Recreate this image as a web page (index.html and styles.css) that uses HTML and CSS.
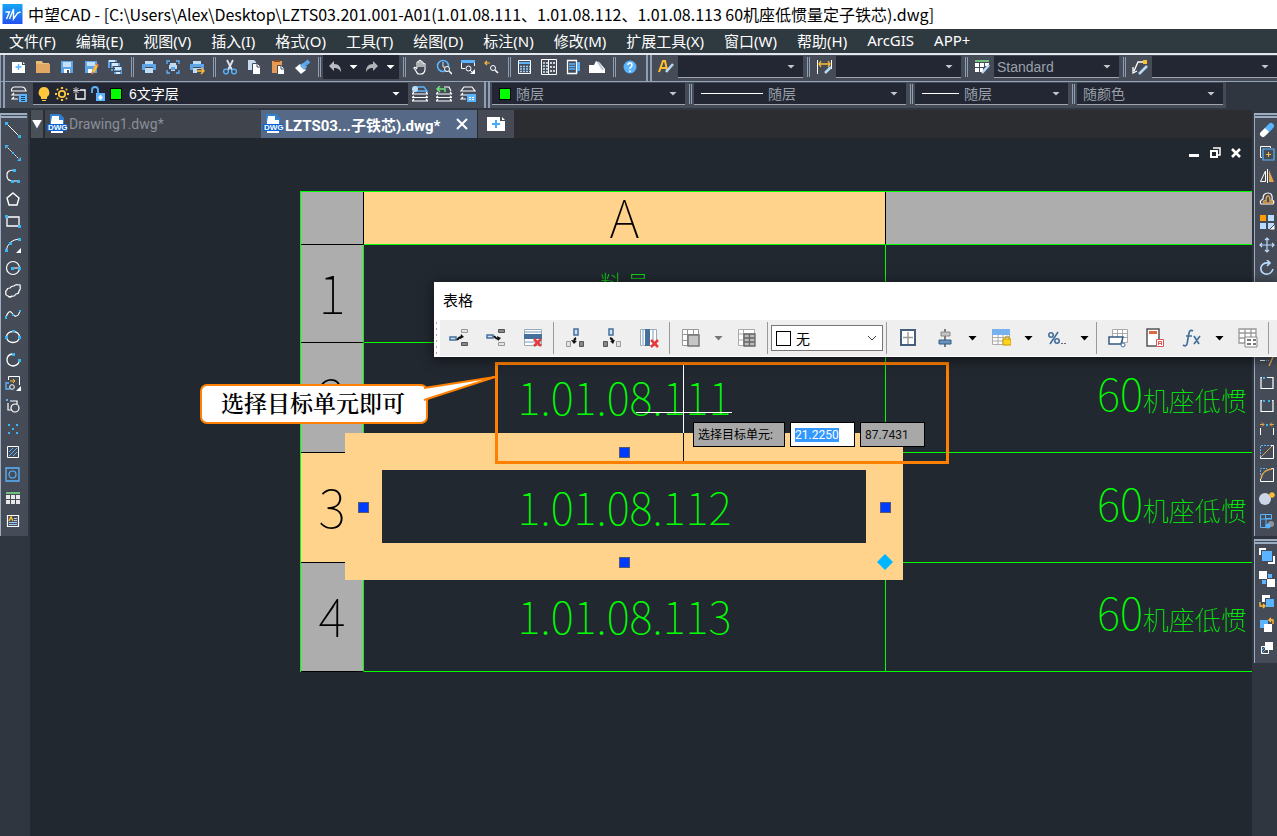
FILE: index.html
```html
<!DOCTYPE html>
<html lang="zh-CN">
<head>
<meta charset="utf-8">
<title>中望CAD</title>
<link rel="stylesheet" href="styles.css">
</head>
<body>
<svg class="sprite" aria-hidden="true">
  <symbol id="new" viewBox="0 0 16 16"><path fill="#fff" d="M1 3h10v3h3v8H1zM12 3l2 2h-2z"/><path stroke="#5ab4ff" stroke-width="1.4" d="M7.500 5v6M4.500 8h6"/></symbol>
  <symbol id="open" viewBox="0 0 16 16"><path fill="#e8bd78" d="M1 2h6l1 2h6v3H1z"/><path fill="#e2a765" d="M1 5h14v9H1z"/></symbol>
  <symbol id="save" viewBox="0 0 16 16"><path fill="#5ea5e8" d="M2 2h12v12H2z"/><path fill="#fff" d="M5 10h6v4H5z"/><path fill="#c4e0fb" d="M4 3h8v5H4z"/><path fill="#456" d="M8 11h2v3H8z"/></symbol>
  <symbol id="saveas" viewBox="0 0 16 16"><path fill="#5ea5e8" d="M2 2h12v12H2z"/><path fill="#c4e0fb" d="M4 3h8v4H4z"/><path fill="#fff" d="M5 10h4v4H5z"/><path stroke="#ffbc35" stroke-width="3" d="M14 6l-4 7"/><path stroke="#e66b3e" stroke-width="2" d="M10 13l-1 2M14 5l1 2"/></symbol>
  <symbol id="saveall" viewBox="0 0 16 16"><path fill="#5ea5e8" stroke="#454c58" d="M.500.500h10v9H.500zM3.500 3.500h10v9h-10zM6.500 7.500h9v8h-9z"/><path fill="#d6ebff" d="M2 1h6v2H2zM5 4h6v3H5zM8 8h6v3H8zM9 13h4v2H9z"/></symbol>
  <symbol id="print" viewBox="0 0 16 16"><path fill="#bfdcf7" d="M4 2h8v3H4zM4 9h8v5H4z"/><path fill="#5ea5e8" d="M1 5h14v6h-3V8H4v3H1z"/></symbol>
  <symbol id="preview" viewBox="0 0 16 16"><path fill="none" stroke="#5ab4ff" stroke-width="1.300" d="M2 5V2h3M11 2h3v3M14 11v3h-3M5 14H2v-3"/><path fill="#bfdcf7" d="M5 4h6v2H5zM4 6h8v4h-2v2H6v-2H4z"/><path fill="#5ea5e8" d="M6 8h4v3H6z"/></symbol>
  <symbol id="publish" viewBox="0 0 16 16"><path fill="#bfdcf7" d="M4 2h8v3H4zM4 9h8v5H4z"/><path fill="#5ea5e8" d="M1 5h14v6h-3V8H4v3H1z"/><path fill="none" stroke="#454c58" stroke-width="4" d="M8 12h6"/><path fill="none" stroke="#ffbc35" stroke-width="1.400" d="M8 12h7M12 9l3 3-3 3"/></symbol>
  <symbol id="cut" viewBox="0 0 16 16"><path fill="none" stroke="#dce6f0" stroke-width="1.800" d="M5 1l5 10M11 1L6 11"/><circle cx="4" cy="12.500" r="2.400" fill="none" stroke="#5ab4ff" stroke-width="1.300"/><circle cx="12" cy="12.500" r="2.400" fill="none" stroke="#5ab4ff" stroke-width="1.300"/></symbol>
  <symbol id="copy" viewBox="0 0 16 16"><path fill="#c7dcef" d="M2 1h6l2 2v8H2z"/><path fill="#fff" stroke="#454c58" d="M6.500 4.500h5l3 3v8h-8z"/><path fill="none" stroke="#454c58" d="M11 5v3h3"/></symbol>
  <symbol id="paste" viewBox="0 0 16 16"><path fill="#e69a54" d="M2 2h10v12H2z"/><path fill="#8d4c23" d="M4 1h6v2H4z"/><path fill="#fff" stroke="#454c58" d="M7.500 6.500h4l3 3v6h-7z"/><path stroke="#454c58" fill="none" d="M11 7v3h3"/></symbol>
  <symbol id="match" viewBox="0 0 16 16"><path fill="#fff" d="M1 9l5-4 6 6-5 4z"/><path stroke="#67b0ed" stroke-width="6" d="M8 9l3-3"/><path stroke="#5ea5e8" stroke-width="4" d="M10 6l5-4"/></symbol>
  <symbol id="undo" viewBox="0 0 16 16"><path fill="#b8bcc2" d="M2 7l5-5v3c5 0 7 3 7 8-2-3-3-4-7-4v3z"/></symbol>
  <symbol id="redo" viewBox="0 0 16 16"><path fill="#b0b3b8" d="M14 7L9 2v3c-5 0-7 3-7 8 2-3 3-4 7-4v3z"/></symbol>
  <symbol id="pan" viewBox="0 0 16 16"><path fill="none" stroke="#fff" stroke-width="1.100" d="M5 9V3.500q1-1.500 2 0V2q1-1.500 2 0v1.500q1-1.500 2 0V5q1-1 2 0v6q-1 4-4 4H7q-2 0-3-3L2 9q0-2 3 1M7 3.500V8M9 3.500V8M11 5v3"/></symbol>
  <symbol id="zoomrt" viewBox="0 0 16 16"><circle cx="7" cy="7" r="5.500" fill="none" stroke="#5ab4ff" stroke-width="1.600"/><path stroke="#cde5fa" fill="none" d="M7 3v5h2"/><circle cx="11" cy="10" r="2.500" fill="#454c58" stroke="#fff"/><path stroke="#fff" stroke-width="1.500" d="M13 12l3 3"/></symbol>
  <symbol id="zoomwin" viewBox="0 0 16 16"><path fill="none" stroke="#fff" d="M5 9.500H1.500V2"/><path fill="none" stroke="#fff" d="M14.500 2v5"/><path fill="#5ab4ff" d="M1 1h14v3H1z"/><circle cx="8.500" cy="9.500" r="2.500" fill="none" stroke="#fff"/><path stroke="#fff" d="M10 11l3 3"/><path fill="#fff" d="M15 10v5h-5z"/></symbol>
  <symbol id="zoomprev" viewBox="0 0 16 16"><path fill="none" stroke="#ffbc35" stroke-width="1.200" d="M1 4h5M3 2L1 4l2 2"/><circle cx="9" cy="9" r="2.500" fill="none" stroke="#fff"/><path stroke="#fff" stroke-width="1.500" d="M11 11l3 3"/></symbol>
  <symbol id="props" viewBox="0 0 16 16"><path fill="none" stroke="#fff" d="M1.500 1.500h12v13h-12z"/><path stroke="#5ab4ff" stroke-width="2" d="M2 4h11"/><path stroke="#9fcfff" stroke-width="1.600" stroke-dasharray="2 1" d="M3 7.500h10M3 10h10M3 12.500h10"/></symbol>
  <symbol id="design" viewBox="0 0 16 16"><path fill="none" stroke="#fff" d="M.500.500h15v15H.500zM7.500 1v14"/><path stroke="#d9e7f5" stroke-width="1.500" stroke-dasharray="2 1" d="M2 4h5M2 7h5M2 10h5M2 13h5"/><path fill="none" stroke="#fff" d="M9.500 3.500h1v1h-1zM12.500 3.500h1v1h-1zM9.500 7.500h1v1h-1zM12.500 7.500h1v1h-1zM9.500 11.500h1v1h-1zM12.500 11.500h1v1h-1z"/></symbol>
  <symbol id="palette" viewBox="0 0 16 16"><path fill="none" stroke="#fff" stroke-width="1.300" d="M2.500 1.500h9v13h-9z"/><path stroke="#5ab4ff" stroke-width="1.400" d="M4 5h6M4 7.500h6M4 10h6"/><path fill="#5ab4ff" d="M12 3h3v9h-2v2h-1z"/></symbol>
  <symbol id="clean" viewBox="0 0 16 16"><path fill="#fff" d="M0 6h5l2-4 4 2 5 6v4H0z"/><path stroke="#bfc8d2" stroke-width="2" d="M9 3l5 8"/></symbol>
  <symbol id="help" viewBox="0 0 16 16"><circle cx="8" cy="8" r="6.500" fill="#5ab4ff"/><path fill="none" stroke="#fff" stroke-width="1.500" d="M6 6q0-2 2-2t2 2-2 3v1M8 11.500V13"/></symbol>
  <symbol id="textstyle" viewBox="0 0 16 16"><path fill="none" stroke="#ffc02e" stroke-width="2" d="M1 13L5 2h2l2 9M3 9h5"/><path stroke="#b8d8f5" stroke-width="2.500" d="M15 5l-7 8"/></symbol>
  <symbol id="dimstyle" viewBox="0 0 16 16"><path stroke="#fff" d="M1.500 1v14M15.500 1v9"/><path fill="none" stroke="#ffc02e" stroke-width="1.300" d="M3 5h11M5 2L3 5l2 3M12 2l2 3-2 3"/><path stroke="#b8d8f5" stroke-width="2.500" d="M15 8l-6 6"/></symbol>
  <symbol id="tabstyle" viewBox="0 0 16 16"><path fill="#71bf7a" d="M1 1h14v2H1z"/><path fill="#fff" d="M1 4h4v4H1zM6 4h4v4H6zM11 4h4v3h-4zM1 9h4v4H1zM6 9h3v4H6z"/><path stroke="#b8d8f5" stroke-width="2.500" d="M15 6l-7 8"/></symbol>
  <symbol id="leader" viewBox="0 0 16 16"><path fill="none" stroke="#fff" stroke-width="1.300" d="M12 3H6L2 12M1 8v6l4-2"/><path fill="#ffc02e" d="M11 1h4v4h-4z"/><path stroke="#b8d8f5" stroke-width="2.500" d="M15 7l-8 8"/></symbol>
  <symbol id="layers" viewBox="0 0 16 16"><path fill="none" stroke="#fff" stroke-width="1.200" d="M3 1h8q3 0 4 4H0q1-4 3-4zM3 7L1 9h13M3 11l-2 2h6"/><path fill="#5ab4ff" d="M8 8h8v8H8z"/><path stroke="#17426b" d="M10 10.500h4M10 12.500h4M10 14.500h4"/></symbol>
  <symbol id="layercur" viewBox="0 0 16 16"><path fill="none" stroke="#5ab4ff" stroke-width="1.300" d="M4 1h8l3 4H1z"/><circle cx="3" cy="3" r="3" fill="#bfdcf7"/><path fill="none" stroke="#fff" stroke-width="1.200" d="M2 6L0 8h16l-2-2M2 10l-2 1.500h16L14 10M2 13l-2 2h16l-2-2"/></symbol>
  <symbol id="layerprev" viewBox="0 0 16 16"><path fill="none" stroke="#6fe07b" stroke-width="1.500" d="M9 6V3H1M4 0L1 3l3 3"/><path fill="none" stroke="#fff" stroke-width="1.200" d="M8 1h5l2 4M2 6L0 8h16l-2-2M2 10l-2 1.500h16L14 10M2 13l-2 2h16l-2-2"/></symbol>
  <symbol id="layerstate" viewBox="0 0 16 16"><path fill="none" stroke="#fff" stroke-width="1.200" d="M4 1h8l3 4H1zM3 7L1 9h13M3 11l-2 2h5"/><path fill="#5ab4ff" d="M7 8h9v8H7z"/><path stroke="#fff" stroke-dasharray="2 1" d="M9 11.500h6M9 13.500h6"/></symbol>
  <symbol id="bulb" viewBox="0 0 16 16"><path fill="#ffc83c" d="M8 1a5.500 5.500 0 0 1 3 10v2H5v-2A5.500 5.500 0 0 1 8 1zM6 14h4v1H6z"/></symbol>
  <symbol id="sun" viewBox="0 0 16 16"><circle cx="8" cy="8" r="3.200" fill="none" stroke="#ffc83c" stroke-width="1.800"/><path stroke="#ffc83c" stroke-width="2.200" d="M8 1v2M8 13v2M1 8h2M13 8h2M3 3l1 1M12 12l1 1M13 3l-1 1M4 12l-1 1"/></symbol>
  <symbol id="freeze" viewBox="0 0 16 16"><path fill="none" stroke="#fff" stroke-width="1.300" d="M8 4h5v9H4V8"/><path stroke="#ccc" d="M4 1v7M1 4.500h7M1.500 2l5 5M6.500 2l-5 5"/></symbol>
  <symbol id="unlock" viewBox="0 0 16 16"><path fill="none" stroke="#5ab4ff" stroke-width="1.800" d="M2 7V4q0-3 3-3t3 3v4"/><path fill="#5ab4ff" d="M6 7h9v8H6z"/><path stroke="#fff" stroke-width="1.800" d="M10.500 9v5M8.500 11.500h4"/></symbol>
  <symbol id="dwg" viewBox="0 0 20 20"><path fill="#2f7fd2" d="M3 0h10l4 4v8H3z"/><path fill="#fff" d="M5 2h7v4h4v13H4V8z"/><path fill="#0b62d6" d="M0 10h20v7H0z"/></symbol>
  <symbol id="line" viewBox="0 0 16 16"><path stroke="#fff" d="M2 2l12 12"/><path fill="#38b6f5" d="M0 0h3v3H0zM13 13h3v3h-3z"/></symbol>
  <symbol id="xline" viewBox="0 0 16 16"><path stroke="#fff" stroke-dasharray="2 1" d="M1 1l14 14"/><path fill="#38b6f5" d="M0 0h4L0 4zM16 16h-4l4-4zM7 7h2v2H7z"/></symbol>
  <symbol id="pline" viewBox="0 0 16 16"><path fill="none" stroke="#fff" stroke-width="1.200" d="M9 2Q1 2 2 8q0 5 6 5h5"/><path fill="#38b6f5" d="M8 1h3v3H8zM6 12h3v3H6zM12 12h3v3h-3z"/></symbol>
  <symbol id="poly" viewBox="0 0 16 16"><path fill="none" stroke="#fff" stroke-width="1.400" d="M8 2l6 5-2 7H4L2 7z"/></symbol>
  <symbol id="rect" viewBox="0 0 16 16"><path fill="none" stroke="#fff" stroke-width="1.300" d="M2 3h12v9H2z"/><path fill="#38b6f5" d="M0 1h3v3H0zM13 11h3v3h-3z"/></symbol>
  <symbol id="arc" viewBox="0 0 16 16"><path fill="none" stroke="#fff" d="M1 14Q3 3 14 2"/><path fill="#38b6f5" d="M0 12h3v3H0zM4 5h3v3H4zM13 1h3v3h-3z"/><path fill="#fff" d="M16 11v5h-5z"/></symbol>
  <symbol id="circle" viewBox="0 0 16 16"><circle cx="8" cy="8" r="6.500" fill="none" stroke="#fff" stroke-width="1.200"/><path stroke="#fff" d="M8 8h6"/><path fill="#38b6f5" d="M6 7h3v3H6zM13 7h3v3h-3z"/></symbol>
  <symbol id="cloud" viewBox="0 0 16 16"><path fill="none" stroke="#fff" stroke-width="1.200" d="M3 13q-3-1-2-3-1-2 1-3 0-2 3-2 1-2 4-2 2-2 4-1 3-1 2 2 1 2-1 4 0 3-3 3-2 3-4 2-2 2-4 0z"/></symbol>
  <symbol id="spline" viewBox="0 0 16 16"><path fill="none" stroke="#fff" stroke-width="1.100" d="M1 11q3-8 6-4t4 3q3 0 4-6"/><path fill="#38b6f5" d="M0 10h2v3H0zM7 8h2v2H7zM14 4h2v2h-2z"/></symbol>
  <symbol id="ellipse" viewBox="0 0 16 16"><ellipse cx="8" cy="8" rx="6.500" ry="5.500" fill="none" stroke="#fff" stroke-width="1.300"/><path fill="#38b6f5" d="M0 7h3v3H0zM7 1h3v2H7zM13 7h3v3h-3z"/></symbol>
  <symbol id="earc" viewBox="0 0 16 16"><path fill="none" stroke="#fff" stroke-width="1.300" d="M7 2Q2 3 2 8q0 5 6 6 6-1 6-5"/><path fill="#38b6f5" d="M7 1h3v3H7zM13 7h3v3h-3z"/></symbol>
  <symbol id="insblk" viewBox="0 0 16 16"><path fill="none" stroke="#fff" d="M3.500 5V1.500h11V10"/><path fill="none" stroke="#5ab4ff" stroke-width="1.400" d="M4 8H1v6h4"/><circle cx="7" cy="12" r="2.300" fill="none" stroke="#fff"/><path fill="none" stroke="#ffbc35" d="M5 6h5M8 4l2 2-2 2"/><path fill="#fff" d="M16 11v5h-5z"/></symbol>
  <symbol id="mkblk" viewBox="0 0 16 16"><path fill="none" stroke="#fff" stroke-width="1.200" d="M5 3h7v3M3 5v7h3"/><circle cx="10" cy="10" r="4" fill="none" stroke="#fff" stroke-width="1.200"/><path fill="#5ab4ff" d="M1 1h2v2H1z"/></symbol>
  <symbol id="points" viewBox="0 0 16 16"><path fill="#38b6f5" d="M3 3h2v2H3zM11 3h2v2h-2zM7 7h2v2H7zM3 11h2v2H3zM11 11h2v2h-2z"/></symbol>
  <symbol id="hatch" viewBox="0 0 16 16"><path fill="none" stroke="#fff" d="M2.500 2.500h11v11h-11z"/><path stroke="#5ab4ff" d="M4 8l4-4M4 12l8-8M8 12l4-4"/></symbol>
  <symbol id="region" viewBox="0 0 16 16"><path fill="none" stroke="#5ab4ff" stroke-width="1.300" d="M1 1h13v13H1z"/><circle cx="7.500" cy="7.500" r="3.500" fill="none" stroke="#5ab4ff" stroke-width="1.200"/></symbol>
  <symbol id="table" viewBox="0 0 16 16"><path fill="#71bf7a" d="M1 2h14v2H1z"/><path fill="#e8e8e8" d="M1 5h4v4H1zM6 5h4v4H6zM11 5h4v4h-4zM1 10h4v4H1zM6 10h4v4H6zM11 10h4v4h-4z"/></symbol>
  <symbol id="mtext" viewBox="0 0 16 16"><path fill="none" stroke="#fff" stroke-width="1.200" d="M2.500 2.500h11v11h-11z"/><path stroke="#ffc02e" stroke-width="1.500" fill="none" d="M4 8l2-4 2 4"/><path stroke="#9fcfff" d="M9 5.500h3M9 7.500h3M4 9.500h8M4 11.500h8"/></symbol>
  <symbol id="erase" viewBox="0 0 16 16"><path stroke="#fff" stroke-width="6" stroke-linecap="round" d="M4 12l3-3"/><path stroke="#5ab4ff" stroke-width="6" stroke-linecap="round" d="M11 5l1-1"/><path stroke="#5ab4ff" stroke-width="6" d="M8 8l3-3"/></symbol>
  <symbol id="dup" viewBox="0 0 16 16"><path fill="none" stroke="#fff" d="M3 12.500H1.500v-11h10V3"/><path fill="none" stroke="#5ab4ff" stroke-width="1.200" d="M4 4h11v11H4z"/><path stroke="#ffbc35" d="M9.500 7v5M7 9.500h5"/></symbol>
  <symbol id="mirror" viewBox="0 0 16 16"><path fill="none" stroke="#fff" d="M6.500 3v10.500h-5zM8.500 1v14"/><path fill="#e0a352" d="M10 2l5 12h-5z"/></symbol>
  <symbol id="offset" viewBox="0 0 16 16"><path fill="none" stroke="#fff" stroke-width="1.200" d="M2 13q-2-3 2-5 0-6 5-6t4 7q3 1 1 4z"/><path fill="none" stroke="#e0a352" stroke-width="1.500" d="M4 11q1-2 3-1 0-5 2-5t2 5h2v2H4"/></symbol>
  <symbol id="array" viewBox="0 0 16 16"><path fill="#ff9d0a" d="M1 1h6v6H1z"/><path fill="#b9dcff" d="M9 1h6v6H9zM1 9h6v6H1zM9 9h6v6H9z"/><path fill="#fff" stroke="#454c58" d="M16 10v6h-6z"/></symbol>
  <symbol id="move" viewBox="0 0 16 16"><path fill="none" stroke="#b9dcff" stroke-width="1.200" d="M8 1v14M1 8h14M6 3l2-2 2 2M6 13l2 2 2-2M3 6L1 8l2 2M13 6l2 2-2 2"/></symbol>
  <symbol id="rotate" viewBox="0 0 16 16"><path fill="none" stroke="#b9dcff" stroke-width="1.600" d="M10 3Q4 2 2 7q-1 5 4 7 6 1 8-5M8 0l3 3-3 3"/></symbol>
  <symbol id="trim" viewBox="0 0 16 16"><path stroke="#fff" d="M1 8.500h5"/><path stroke="#5ab4ff" stroke-dasharray="1 1" d="M7 8.500h4"/><path stroke="#e0a352" stroke-width="1.500" d="M14 5l-4 9"/></symbol>
  <symbol id="break1" viewBox="0 0 16 16"><path fill="none" stroke="#fff" stroke-width="1.200" d="M3 2.500H2v11h12v-11H8"/><path fill="#38b6f5" d="M4 2h2v2H4z"/></symbol>
  <symbol id="break2" viewBox="0 0 16 16"><path fill="none" stroke="#fff" stroke-width="1.200" d="M3 2.500H2v11h12v-11h-1"/><path fill="#38b6f5" d="M4 2h2v2H4zM9 2h2v2H9z"/></symbol>
  <symbol id="join" viewBox="0 0 16 16"><path stroke="#fff" d="M1.500 7v7M14.500 7v7"/><path fill="none" stroke="#e0a352" d="M1 3.500h4M3 1.500l2 2-2 2M15 3.500h-4M13 1.500l-2 2 2 2"/><path fill="#38b6f5" d="M7 3h2v2H7z"/></symbol>
  <symbol id="chamfer" viewBox="0 0 16 16"><path fill="none" stroke="#5ab4ff" stroke-dasharray="2 1" d="M1.500 13V1.500H12"/><path fill="none" stroke="#fff" d="M12 1.500h2.500v13H1.500V13"/><path stroke="#e0a352" d="M2 13L13 2"/></symbol>
  <symbol id="fillet" viewBox="0 0 16 16"><path fill="none" stroke="#5ab4ff" stroke-dasharray="2 1" d="M1.500 8V1.500H8"/><path fill="none" stroke="#fff" d="M12 1.500h2.500v13H1.500V12"/><path fill="none" stroke="#e0a352" stroke-width="1.400" d="M2 12Q3 3 13 2"/></symbol>
  <symbol id="explode" viewBox="0 0 16 16"><circle cx="6" cy="9" r="6" fill="#ccd6e8"/><path stroke="#ffbc35" stroke-width="1.400" d="M13 2v6M10 5h6M11 3l4 4M15 3l-4 4"/></symbol>
  <symbol id="blkedit" viewBox="0 0 16 16"><path fill="none" stroke="#5ab4ff" d="M1.500 1.500h11v4H7v9H1.500zM6.500 1v5M1 6h12"/><circle cx="12" cy="11" r="3" fill="#8e949c"/><circle cx="9" cy="13" r="2.500" fill="#5ab4ff"/></symbol>
  <symbol id="front" viewBox="0 0 16 16"><path fill="none" stroke="#fff" stroke-width="2" d="M1 7V1h6M15 8v7H9"/><path fill="#5ab4ff" d="M3 3h10v10H3z"/></symbol>
  <symbol id="back" viewBox="0 0 16 16"><path fill="#fff" d="M0 0h8v8H0zM8 8h8v8H8z"/><path fill="#5ab4ff" d="M9 3h4v4H9zM3 9h4v4H3z"/></symbol>
  <symbol id="above" viewBox="0 0 16 16"><path fill="#fff" d="M3 1h8v3H6v4H3z"/><path fill="#5ab4ff" d="M7 5h8v8H7z"/><path fill="none" stroke="#ffbc35" stroke-width="1.400" d="M1 8v4h5M4 10l2 2-2 2"/></symbol>
  <symbol id="under" viewBox="0 0 16 16"><path fill="#5ab4ff" d="M1 3h8v8H1z"/><path fill="#fff" d="M5 7h8v8H5z"/><path fill="none" stroke="#ffbc35" stroke-width="1.400" d="M14 7V3h-4M12 1l-2 2 2 2"/></symbol>
  <symbol id="hatchback" viewBox="0 0 16 16"><path fill="none" stroke="#fff" d="M2.500 6.500h7v7h-7z"/><path stroke="#5ab4ff" d="M3 10l3-3M3 13l6-6"/><path fill="#fff" d="M6 2h8v8H6z"/></symbol>
  <symbol id="rowabove" viewBox="0 0 20 20"><path fill="#cfe3f2" stroke="#45709c" stroke-width="1.500" d="M1 9h6v3H1z"/><path fill="#dce6ee" stroke="#999" d="M12.500 1.500h6v3h-6z"/><path fill="#888" stroke="#555" d="M12.500 14.500h6v3h-6z"/><path fill="none" stroke="#111" stroke-width="2" d="M8 12q2-3 5-3"/><path fill="#111" d="M12 6l3 3-4 2z"/></symbol>
  <symbol id="rowbelow" viewBox="0 0 20 20"><path fill="#cfe3f2" stroke="#45709c" stroke-width="1.500" d="M1 7h6v3H1z"/><path fill="#888" stroke="#555" d="M12.500 1.500h6v3h-6z"/><path fill="#dce6ee" stroke="#999" d="M12.500 14.500h6v3h-6z"/><path fill="none" stroke="#111" stroke-width="2" d="M8 8q2 3 5 3"/><path fill="#111" d="M12 13l3-3-4-2z"/></symbol>
  <symbol id="delrow" viewBox="0 0 20 20"><path fill="#fff" stroke="#9ab" d="M1.500 1.500h17v16h-17z"/><path stroke="#bcd" stroke-width="2" d="M2 4h16M2 14h16"/><path fill="#45709c" d="M1 6h18v5H1z"/><path stroke="#e83a3a" stroke-width="2.500" d="M11 11l7 7M18 11l-7 7"/></symbol>
  <symbol id="colleft" viewBox="0 0 20 20"><path fill="#cfe3f2" stroke="#45709c" stroke-width="1.500" d="M9 1h4v6H9z"/><path fill="#dce6ee" stroke="#999" d="M1.500 13.500h4v5h-4z"/><path fill="#888" stroke="#555" d="M14.500 13.500h4v5h-4z"/><path fill="none" stroke="#111" stroke-width="2" d="M11 10q-2 1-2 4"/><path fill="#111" d="M6 12l3 4 3-3z"/></symbol>
  <symbol id="colright" viewBox="0 0 20 20"><path fill="#cfe3f2" stroke="#45709c" stroke-width="1.500" d="M7 1h4v6H7z"/><path fill="#888" stroke="#555" d="M1.500 13.500h4v5h-4z"/><path fill="#dce6ee" stroke="#999" d="M14.500 13.500h4v5h-4z"/><path fill="none" stroke="#111" stroke-width="2" d="M8 10q3 1 3 4"/><path fill="#111" d="M8 13l3 3 2-4z"/></symbol>
  <symbol id="delcol" viewBox="0 0 20 20"><path fill="#fff" stroke="#9ab" d="M1.500 1.500h16v16h-16z"/><path stroke="#bcd" stroke-width="2" d="M4 2v16M14 2v16"/><path fill="#45709c" d="M6 1h5v17H6z"/><path stroke="#e83a3a" stroke-width="2.500" d="M12 12l7 7M19 12l-7 7"/></symbol>
  <symbol id="merge" viewBox="0 0 20 20"><path fill="#fff" stroke="#999" d="M1.500 1.500h16v16h-16zM1 6.500h16M6.500 1v16M12.500 1v5M1 12.500h5"/><path fill="#c5c5c5" stroke="#777" stroke-width="1.500" d="M7 7h11v11H7z"/></symbol>
  <symbol id="unmerge" viewBox="0 0 20 20"><path fill="#fff" stroke="#aaa" d="M1.500 1.500h16v16h-16zM1 6h16M6.500 1v16M1 12h5"/><path fill="#bbb" stroke="#666" stroke-width="1.300" d="M7 6h11v12H7zM7 10h11M7 14h11M12.500 6v12"/></symbol>
  <symbol id="borders" viewBox="0 0 20 20"><path fill="#fff" stroke="#44607c" stroke-width="2" d="M3 2h14v15H3z"/><path stroke="#999" stroke-width="1.400" d="M10 4v12M5 9.500h10"/></symbol>
  <symbol id="align" viewBox="0 0 20 20"><path stroke="#555" stroke-width="1.500" d="M10 1v18"/><path fill="#c5c5c5" stroke="#888" d="M6 4h9v4H6z"/><path fill="#6995c0" stroke="#345c84" d="M4 12h12v4H4z"/></symbol>
  <symbol id="lock" viewBox="0 0 20 20"><path fill="#fff" stroke="#aaa" d="M1.500 2.500h17v14h-17zM2 9.500h16M2 13h16M7 5v11M12 5v11"/><path fill="#77b1ee" d="M1 1h18v6H1z"/><path fill="none" stroke="#ca9a00" d="M14 11v-2q2-2 4 0v2"/><path fill="#ffd51c" stroke="#ca9a00" d="M12 11h8v6h-8z"/></symbol>
  <symbol id="pct" viewBox="0 0 20 20"><g fill="none" stroke="#45709c" stroke-width="1.600"><circle cx="4" cy="7" r="2.200"/><circle cx="10" cy="13" r="2.200"/><path d="M11 4L3 16"/></g><path fill="#667" d="M14 15h2v1h-2zM17 15h2v1h-2z"/></symbol>
  <symbol id="blockcell" viewBox="0 0 20 20"><path fill="#fff" stroke="#aaa" d="M4.500 1.500h15v13h-15zM4 5.500h15M4 9.500h15M9.500 1v13M14.500 1v13"/><path fill="#fff" stroke="#345c84" stroke-width="1.500" d="M4 9h11l-2 7H1V9z"/><circle cx="15" cy="17" r="2" fill="#fff" stroke="#45709c"/></symbol>
  <symbol id="field" viewBox="0 0 20 20"><path fill="#fff" stroke="#555" stroke-width="1.500" d="M2 1h12v17H2z"/><path fill="#e06646" d="M4 3h8v3H4z"/><path fill="#fff" stroke="#d55" d="M11.500 11.500h7v7h-7z"/><path fill="none" stroke="#d55" d="M13.500 17v-3.500h3V17M13.500 15.500h3"/></symbol>
  <symbol id="fx" viewBox="0 0 20 20"><path fill="none" stroke="#45709c" stroke-width="1.700" d="M11 3q-3-2-4 2L5 16q-1 3-4 1M4 8h6M12 8l5 8M18 8l-6 8"/></symbol>
  <symbol id="cellstyle" viewBox="0 0 20 20"><path fill="#fff" stroke="#999" stroke-width="1.300" d="M1 1h17v14H1zM1 5h17M1 10h17M7 1v14M13 1v14"/><path fill="#fff" stroke="#888" d="M7 9h12v10H7z"/><path stroke="#777" stroke-width="2" stroke-dasharray="4 2" d="M9 12h9M9 16h9"/></symbol>
</svg>

<div class="app">
  <header class="title">
    <svg class="logo" viewBox="0 0 20 20"><defs><linearGradient id="lg" x2="0" y2="1"><stop stop-color="#15a7f5"/><stop offset="1" stop-color="#2450ef"/></linearGradient></defs><path fill="url(#lg)" d="M0 0h20v20H0z"/><path fill="none" stroke="#fff" stroke-width="1.400" d="M3 8h4l-3 7M7 15l4-10v10l4-6 3-1"/></svg>
    <span>中望CAD - [C:\Users\Alex\Desktop\LZTS03.201.001-A01(1.01.08.111、1.01.08.112、1.01.08.113 60机座低惯量定子铁芯).dwg]</span>
  </header>
  <nav class="menu">
    <a href="#">文件(F)</a><a href="#">编辑(E)</a><a href="#">视图(V)</a><a href="#">插入(I)</a><a href="#">格式(O)</a><a href="#">工具(T)</a><a href="#">绘图(D)</a><a href="#">标注(N)</a><a href="#">修改(M)</a><a href="#">扩展工具(X)</a><a href="#">窗口(W)</a><a href="#">帮助(H)</a><a href="#">ArcGIS</a><a href="#">APP+</a>
  </nav>

  <div class="bar">
    <i class="grip"></i>
    <button class="ib" aria-label="新建"><svg><use href="#new"/></svg></button>
    <button class="ib" aria-label="打开"><svg><use href="#open"/></svg></button>
    <button class="ib" aria-label="保存"><svg><use href="#save"/></svg></button>
    <button class="ib" aria-label="另存为"><svg><use href="#saveas"/></svg></button>
    <button class="ib" aria-label="全部保存"><svg><use href="#saveall"/></svg></button>
    <i class="sep wide"></i>
    <button class="ib" aria-label="打印"><svg><use href="#print"/></svg></button>
    <button class="ib" aria-label="预览"><svg><use href="#preview"/></svg></button>
    <button class="ib" aria-label="发布"><svg><use href="#publish"/></svg></button>
    <i class="sep"></i>
    <button class="ib" aria-label="剪切"><svg><use href="#cut"/></svg></button>
    <button class="ib" aria-label="复制"><svg><use href="#copy"/></svg></button>
    <button class="ib" aria-label="粘贴"><svg><use href="#paste"/></svg></button>
    <button class="ib" aria-label="特性匹配"><svg><use href="#match"/></svg></button>
    <i class="sep"></i>
    <div class="history">
      <button class="ib" aria-label="撤销"><svg><use href="#undo"/></svg></button><button class="drop" aria-label="撤销列表"></button>
      <button class="ib" aria-label="重做"><svg><use href="#redo"/></svg></button><button class="drop" aria-label="重做列表"></button>
    </div>
    <i class="sep"></i>
    <button class="ib" aria-label="平移"><svg><use href="#pan"/></svg></button>
    <button class="ib" aria-label="实时缩放"><svg><use href="#zoomrt"/></svg></button>
    <button class="ib" aria-label="窗口缩放"><svg><use href="#zoomwin"/></svg></button>
    <button class="ib" aria-label="缩放上一个"><svg><use href="#zoomprev"/></svg></button>
    <i class="sep"></i>
    <button class="ib" aria-label="特性"><svg><use href="#props"/></svg></button>
    <button class="ib" aria-label="设计中心"><svg><use href="#design"/></svg></button>
    <button class="ib" aria-label="工具选项板"><svg><use href="#palette"/></svg></button>
    <button class="ib" aria-label="清理"><svg><use href="#clean"/></svg></button>
    <i class="sep"></i>
    <button class="ib" aria-label="帮助"><svg><use href="#help"/></svg></button>
    <i class="grip mid"></i>
    <button class="ib" aria-label="文字样式"><svg><use href="#textstyle"/></svg></button>
    <div class="combo style"><select aria-label="文字样式列表"><option></option></select></div>
    <i class="sep"></i>
    <button class="ib" aria-label="标注样式"><svg><use href="#dimstyle"/></svg></button>
    <div class="combo style"><select aria-label="标注样式列表"><option></option></select></div>
    <i class="sep"></i>
    <button class="ib" aria-label="表格样式"><svg><use href="#tabstyle"/></svg></button>
    <div class="combo style"><select aria-label="表格样式列表"><option>Standard</option></select></div>
    <i class="sep"></i>
    <button class="ib" aria-label="引线样式"><svg><use href="#leader"/></svg></button>
    <div class="combo style"><select aria-label="引线样式列表"><option></option></select></div>
  </div>

  <div class="barrow">
    <div class="bar second">
      <i class="grip"></i>
      <button class="ib lay" aria-label="图层特性"><svg><use href="#layers"/></svg></button>
      <div class="combo layer">
        <svg><use href="#bulb"/></svg><svg><use href="#sun"/></svg><svg><use href="#freeze"/></svg><svg><use href="#unlock"/></svg>
        <i class="swatch"></i><select aria-label="图层"><option>6文字层</option></select>
      </div>
      <button class="ib" aria-label="置为当前"><svg><use href="#layercur"/></svg></button>
      <button class="ib" aria-label="上一图层"><svg><use href="#layerprev"/></svg></button>
      <button class="ib" aria-label="图层状态"><svg><use href="#layerstate"/></svg></button>
      <i class="grip mid"></i>
      <div class="combo color"><i class="swatch"></i><select aria-label="颜色"><option>随层</option></select></div>
      <i class="sep"></i>
      <div class="combo ltype"><i class="sample"></i><select aria-label="线型"><option>随层</option></select></div>
      <i class="sep"></i>
      <div class="combo lweight"><i class="sample short"></i><select aria-label="线宽"><option>随层</option></select></div>
      <i class="sep"></i>
      <div class="combo plot"><select aria-label="打印样式"><option>随颜色</option></select></div>
    </div>
  </div>

  <div class="work">
    <aside class="dock">
      <div class="strip">
        <i class="hgrip"></i>
        <button aria-label="直线"><svg><use href="#line"/></svg></button>
        <button aria-label="构造线"><svg><use href="#xline"/></svg></button>
        <button aria-label="多段线"><svg><use href="#pline"/></svg></button>
        <button aria-label="正多边形"><svg><use href="#poly"/></svg></button>
        <button aria-label="矩形"><svg><use href="#rect"/></svg></button>
        <button aria-label="圆弧"><svg><use href="#arc"/></svg></button>
        <button aria-label="圆"><svg><use href="#circle"/></svg></button>
        <button aria-label="修订云线"><svg><use href="#cloud"/></svg></button>
        <button aria-label="样条曲线"><svg><use href="#spline"/></svg></button>
        <button aria-label="椭圆"><svg><use href="#ellipse"/></svg></button>
        <button aria-label="椭圆弧"><svg><use href="#earc"/></svg></button>
        <button aria-label="插入块"><svg><use href="#insblk"/></svg></button>
        <button aria-label="创建块"><svg><use href="#mkblk"/></svg></button>
        <button aria-label="点"><svg><use href="#points"/></svg></button>
        <button aria-label="填充"><svg><use href="#hatch"/></svg></button>
        <button aria-label="面域"><svg><use href="#region"/></svg></button>
        <button aria-label="表格"><svg><use href="#table"/></svg></button>
        <button aria-label="多行文字"><svg><use href="#mtext"/></svg></button>
      </div>
    </aside>

    <main class="center">
      <div class="tabs">
        <button class="tablist" aria-label="文档列表"></button>
        <div class="tab"><span class="dwg"><svg><use href="#dwg"/></svg><b>DWG</b></span><a href="#">Drawing1.dwg*</a></div>
        <div class="tab on"><span class="dwg"><svg><use href="#dwg"/></svg><b>DWG</b></span><a href="#">LZTS03...子铁芯).dwg*</a><button class="close" aria-label="关闭"><svg viewBox="0 0 12 12"><path stroke="#fff" stroke-width="2" d="M1 1l10 10M11 1L1 11"/></svg></button></div>
        <button class="addtab" aria-label="新建图形"><svg viewBox="0 0 18 14"><path fill="#fff" d="M0 0h13v4h5v10H0zM15 0l3 3h-3z"/><path stroke="#49aaf5" stroke-width="2" d="M9 3v8M5 7h8"/></svg></button>
      </div>
      <div class="canvas">
        <div class="winctl">
          <button aria-label="最小化"><svg viewBox="0 0 12 12"><path fill="#fff" d="M1 7h10v3H1z"/></svg></button>
          <button aria-label="还原"><svg viewBox="0 0 12 12"><path fill="none" stroke="#fff" stroke-width="1.500" d="M4 1h7v7H9"/><path fill="none" stroke="#fff" stroke-width="2" d="M2 4h6v6H2z"/></svg></button>
          <button aria-label="关闭窗口"><svg viewBox="0 0 12 12"><path stroke="#fff" stroke-width="2.500" d="M2 2l8 8M10 2l-8 8"/></svg></button>
        </div>
        <table class="sheet">
          <colgroup><col class="c0"><col class="c1"><col></colgroup>
          <thead><tr class="r0"><th></th><th class="sel">A</th><th></th></tr></thead>
          <tbody>
            <tr class="r1"><th>1</th><td class="cap">料 号</td><td></td></tr>
            <tr class="r2"><th>2</th><td>1.01.08.111</td><td class="desc">60<span>机座低惯</span></td></tr>
            <tr class="r3"><th class="sel">3</th><td>1.01.08.112</td><td class="desc">60<span>机座低惯</span></td></tr>
            <tr class="r4"><th>4</th><td>1.01.08.113</td><td class="desc">60<span>机座低惯</span></td></tr>
          </tbody>
        </table>
        <div class="pick"><i class="knob n"></i><i class="knob s"></i><i class="knob w"></i><i class="knob e"></i><i class="fill"></i></div>
        <div class="marker"></div>
        <i class="cross v"></i><i class="cross h"></i>
        <div class="dyn">
          <label for="px">选择目标单元:</label>
          <input id="px" class="x" value="21.2250">
          <input class="y" aria-label="Y" value="87.7431">
        </div>
        <svg class="tail" viewBox="0 0 76 34"><path fill="#fff" stroke="#ff8000" stroke-width="2" d="M2 14L73 3 2 26"/></svg>
        <div class="callout">选择目标单元即可</div>
      </div>
    </main>

    <aside class="dock right">
      <div class="strip">
        <i class="hgrip"></i>
        <button aria-label="删除"><svg><use href="#erase"/></svg></button>
        <button aria-label="复制对象"><svg><use href="#dup"/></svg></button>
        <button aria-label="镜像"><svg><use href="#mirror"/></svg></button>
        <button aria-label="偏移"><svg><use href="#offset"/></svg></button>
        <button aria-label="阵列"><svg><use href="#array"/></svg></button>
        <button aria-label="移动"><svg><use href="#move"/></svg></button>
        <button aria-label="旋转"><svg><use href="#rotate"/></svg></button>
        <button aria-label="缩放"></button><button aria-label="拉伸"></button><button aria-label="延伸"></button>
        <button aria-label="修剪"><svg><use href="#trim"/></svg></button>
        <button aria-label="打断于点"><svg><use href="#break1"/></svg></button>
        <button aria-label="打断"><svg><use href="#break2"/></svg></button>
        <button aria-label="合并"><svg><use href="#join"/></svg></button>
        <button aria-label="倒角"><svg><use href="#chamfer"/></svg></button>
        <button aria-label="圆角"><svg><use href="#fillet"/></svg></button>
        <button aria-label="分解"><svg><use href="#explode"/></svg></button>
        <button aria-label="块编辑"><svg><use href="#blkedit"/></svg></button>
      </div>
      <div class="strip">
        <i class="hgrip"></i>
        <button aria-label="前置"><svg><use href="#front"/></svg></button>
        <button aria-label="后置"><svg><use href="#back"/></svg></button>
        <button aria-label="置于对象之上"><svg><use href="#above"/></svg></button>
        <button aria-label="置于对象之下"><svg><use href="#under"/></svg></button>
        <button aria-label="填充后置"><svg><use href="#hatchback"/></svg></button>
      </div>
    </aside>
  </div>

  <section class="float">
    <h2>表格</h2>
    <div class="tools">
      <i class="dots"></i>
      <button class="tb" aria-label="在上方插入行"><svg><use href="#rowabove"/></svg></button>
      <button class="tb" aria-label="在下方插入行"><svg><use href="#rowbelow"/></svg></button>
      <button class="tb" aria-label="删除行"><svg><use href="#delrow"/></svg></button>
      <i class="line"></i>
      <button class="tb" aria-label="在左侧插入列"><svg><use href="#colleft"/></svg></button>
      <button class="tb" aria-label="在右侧插入列"><svg><use href="#colright"/></svg></button>
      <button class="tb" aria-label="删除列"><svg><use href="#delcol"/></svg></button>
      <i class="line"></i>
      <button class="tb" aria-label="合并单元"><svg><use href="#merge"/></svg></button>
      <button class="drop dim" aria-label="合并选项"></button>
      <button class="tb" aria-label="取消合并"><svg><use href="#unmerge"/></svg></button>
      <i class="line"></i>
      <div class="bgsel"><i></i><select aria-label="背景填充"><option>无</option></select><svg viewBox="0 0 10 6"><path fill="none" stroke="#444" d="M1 1l4 4 4-4"/></svg></div>
      <i class="line"></i>
      <button class="tb" aria-label="单元边框"><svg><use href="#borders"/></svg></button>
      <button class="tb" aria-label="对齐"><svg><use href="#align"/></svg></button>
      <button class="drop" aria-label="对齐选项"></button>
      <button class="tb" aria-label="锁定"><svg><use href="#lock"/></svg></button>
      <button class="drop" aria-label="锁定选项"></button>
      <button class="tb" aria-label="数据格式"><svg><use href="#pct"/></svg></button>
      <button class="drop" aria-label="格式选项"></button>
      <i class="line"></i>
      <button class="tb" aria-label="插入块到单元"><svg><use href="#blockcell"/></svg></button>
      <button class="tb" aria-label="字段"><svg><use href="#field"/></svg></button>
      <button class="tb" aria-label="公式"><svg><use href="#fx"/></svg></button>
      <button class="drop" aria-label="公式选项"></button>
      <button class="tb" aria-label="单元样式"><svg><use href="#cellstyle"/></svg></button>
      <i class="line"></i>
    </div>
  </section>
</div>
<script src="app.js"></script>
</body>
</html>
```
FILE: styles.css
```css
* { box-sizing: border-box; }
body { margin: 0; background: #30363f; font-family: "Noto Sans", "Noto Sans CJK SC", sans-serif; }
button { margin: 0; padding: 0; border: 0; background: none; font: inherit; color: inherit; }
a { color: inherit; text-decoration: none; }
i { font-style: normal; flex: none; }
.sprite { position: absolute; width: 0; height: 0; }
.app { position: relative; display: flex; flex-direction: column; min-height: 100vh; overflow: hidden; }

.title { display: flex; align-items: center; gap: 5px; height: 29px; padding-left: 2px; padding-bottom: 1px; background: #fff; color: #000; font-family: "Noto Sans CJK SC", "Noto Sans", sans-serif; font-size: 16px; line-height: 24px; white-space: nowrap; }
.logo { width: 21px; height: 20px; flex: none; }
.menu { display: flex; gap: 20px; align-items: center; height: 24px; padding-left: 9px; padding-bottom: 2px; background: #2f3940; color: #fff; font-size: 15px; white-space: nowrap; }

.bar { display: flex; align-items: center; height: 29px; padding-bottom: 2px; background: #454c58; border-top: 2px solid #e4e8ee; border-bottom: 1px solid #93a3b8; }
.barrow { display: flex; background: #30363f; padding-bottom: 2px; }
.bar.second { height: 26px; border: 0; padding-right: 3px; }
.grip { width: 7px; align-self: stretch; margin-bottom: -2px; border-left: 1px solid #8f9fb3; background: linear-gradient(90deg, transparent 2px, #8f9fb3 2px, #8f9fb3 4px, transparent 4px); }
.grip.mid { margin-left: 4px; width: 8px; border-left-width: 2px; }
.sep { width: 9px; height: 20px; background: linear-gradient(90deg, transparent 4px, #8f9fb3 4px, #8f9fb3 5px, transparent 5px, transparent 6px, #8f9fb3 6px, #8f9fb3 7px, transparent 7px); }
.sep.wide { width: 10px; }
.ib { display: grid; place-items: center; width: 24px; height: 24px; flex: none; }
.ib svg { width: 16px; height: 16px; }
.ib.lay { margin-right: 2px; }
.history { display: flex; width: 76px; height: 24px; background: #222733; }
.drop { display: grid; place-items: center; width: 13px; flex: none; }
.drop::after, .combo::after { content: ""; width: 8px; height: 4px; background: #fff; clip-path: polygon(0 0, 100% 0, 50% 100%); flex: none; }
.combo { display: flex; align-items: center; height: 22px; padding-right: 8px; background: #222733; border-bottom: 1px solid #a0a5ad; color: #9aa0aa; font-family: "Liberation Sans", "Noto Sans CJK SC", sans-serif; font-size: 14px; }
.combo::after { background: #c4c6ca; }
.combo select { flex: 1; min-width: 0; appearance: none; border: 0; padding: 0 3px; background: transparent; color: inherit; font: inherit; }
.combo.style { flex: 1 1 125px; }
.combo.layer { width: 375px; padding-left: 3px; gap: 2px; color: #fff; }
.combo.layer svg { width: 16px; height: 16px; flex: none; }
.combo.layer::after { background: #fff; }
.swatch { width: 12px; height: 12px; margin: 0 2px; background: #0f0; border: 1px solid #000; }
.combo.color { width: 193px; padding-left: 5px; }
.combo.ltype { width: 212px; padding-left: 7px; }
.combo.lweight { width: 153px; padding-left: 7px; }
.combo.plot { width: 146px; padding-left: 3px; }
.sample { width: 62px; height: 1px; margin-right: 2px; background: #fff; }
.sample.short { width: 37px; }

.work { display: flex; flex: 1; }
.dock { width: 30px; flex: none; padding-top: 3px; background: #30363f; }
.dock.right { width: 25px; padding-left: 2px; }
.strip { display: flex; flex-direction: column; align-items: center; width: 28px; padding-right: 4px; padding-bottom: 4px; background: #454c58; border-left: 1px solid #9cadc2; margin-bottom: 3px; }
.right .strip { width: auto; padding: 0 0 4px 1px; }
.strip button { display: grid; place-items: center; width: 22px; height: 23px; }
.strip svg { width: 16px; height: 16px; }
.hgrip { align-self: stretch; height: 5px; margin-right: -3px; border: solid #9cadc2; border-width: 2px 0; }
.right .hgrip { margin: 0 0 0 -1px; }
.center { flex: 1; min-width: 0; display: flex; flex-direction: column; }
.tabs { display: flex; height: 28px; background: #2b2d31; padding-left: 1px; color: #a3a7ad; font-family: Roboto, "Noto Sans CJK SC", sans-serif; font-size: 14px; }
.tablist { display: grid; place-items: center; width: 12px; margin-right: 2px; background: #4a5058; }
.tablist::after { content: ""; width: 10px; height: 9px; background: #fff; clip-path: polygon(0 0, 100% 0, 50% 100%); }
.tab { display: flex; align-items: center; width: 216px; padding-left: 2px; gap: 2px; background: #3f444d; color: #8b8f96; white-space: nowrap; }
.tab.on { background: #566a88; color: #fff; font-weight: 700; font-size: 15px; }
.tab a { flex: 1; }
.dwg { position: relative; width: 20px; height: 20px; }
.dwg svg { width: 20px; height: 20px; }
.dwg b { position: absolute; left: 1px; top: 9px; color: #fff; font: 700 8px/9px "Liberation Sans", sans-serif; }
.close { width: 12px; height: 12px; margin-right: 9px; }
.close svg, .addtab svg { display: block; }
.addtab { display: grid; place-items: center; width: 36px; margin-left: 1px; background: #454a55; }
.addtab svg { width: 18px; height: 14px; }
.canvas { position: relative; flex: 1; overflow: hidden; background: #222830; }
.winctl { position: absolute; right: 10px; top: 9px; display: flex; gap: 9px; }
.winctl svg { display: block; width: 12px; height: 12px; }

.sheet { position: absolute; left: 270px; top: 53px; width: calc(100% - 270px); table-layout: fixed; border-collapse: separate; border-spacing: 0; border-left: 1px solid #0f0; border-top: 1px solid #0f0; font-family: "Noto Sans CJK SC", sans-serif; font-weight: 100; font-size: 44px; line-height: 44px; color: #0f0; }
.c0 { width: 63px; }
.c1 { width: 522px; }
.sheet th, .sheet td { padding: 0 0 4px; font-weight: 100; text-align: center; white-space: nowrap; border-right: 1px solid #0f0; border-bottom: 1px solid #0f0; }
.sheet tr > :last-child { border-right: 0; }
.sheet th { background: #adadad; color: #000; font-size: 52px; }
.sheet tbody th { border-bottom-color: #000; }
.sheet thead th { border-right-color: #000; }
.sheet thead th:first-child { border-bottom-color: #000; }
.sheet th.sel { background: #ffd38c; }
.r0 { height: 53px; }
.r1 { height: 98px; }
.r2, .r3 { height: 110px; }
.r4 { height: 109px; }
.sheet .cap { vertical-align: top; padding-top: 14px; font-size: 22px; }
.sheet .desc { text-align: left; padding-left: 211px; overflow: hidden; }
.sheet .desc span { font-size: 26px; }

.pick { position: absolute; left: 315px; top: 295px; width: 558px; height: 147px; border: 37px solid #ffd38c; }
.knob { position: absolute; width: 11px; height: 11px; background: #003cff; border: 1px solid #555b6b; }
.knob.n { left: 237px; top: -23px; }
.knob.s { left: 237px; bottom: -25px; }
.knob.w { left: -24px; top: 32px; }
.knob.e { right: -25px; top: 32px; }
.fill { position: absolute; right: -27px; bottom: -27px; width: 16px; height: 16px; background: #00b7ff; clip-path: polygon(50% 0, 100% 50%, 50% 100%, 0 50%); }
.marker { position: absolute; left: 465px; top: 224px; width: 454px; height: 102px; border: 3px solid #ff8000; }
.cross { position: absolute; background: #fff; }
.cross.v { left: 653px; top: 227px; width: 1px; height: 96px; background: linear-gradient(#fff 68px, #111 68px); }
.cross.h { left: 606px; top: 274px; width: 96px; height: 1px; }
.dyn { position: absolute; left: 663px; top: 284px; display: flex; gap: 5px; align-items: flex-start; font-family: Roboto, "Noto Sans CJK SC", sans-serif; font-size: 12px; color: #000; }
.dyn label, .dyn input { height: 25px; border: 1px solid #000; background: #a8a8a8; padding: 0 4px; white-space: nowrap; line-height: 24px; }
.dyn label { width: 92px; }
.dyn input { width: 65px; font: inherit; color: #111; outline: 0; }
.dyn input.x { background: #fff; }
.dyn ::selection { background: #3399ff; color: #fff; }
.callout { position: absolute; left: 170px; top: 246px; padding: 2px 21px 4px 19px; border: 2px solid #ff8000; border-radius: 7px; background: #fff; color: #000; font: 600 23px/30px "Noto Serif CJK SC", "Noto Sans CJK SC", serif; white-space: nowrap; }
.tail { position: absolute; left: 392px; top: 236px; width: 76px; height: 34px; z-index: 1; }

.float { position: absolute; left: 434px; right: 0; top: 282px; background: #efefef; border-bottom: 1px solid #fff; box-shadow: 0 2px 12px rgba(0, 0, 0, .6); color: #000; }
.float h2 { margin: 0; height: 38px; padding-left: 9px; background: #fff; font-size: 15px; line-height: 37px; font-weight: 400; }
.tools { display: flex; align-items: center; height: 36px; overflow: hidden; }
.dots { width: 6px; align-self: stretch; background: radial-gradient(circle, #aaa 1px, #fff 1px) 0 0 / 5px 6px; }
.tb { display: grid; place-items: center; width: 37px; height: 30px; flex: none; }
.tb svg { width: 20px; height: 20px; }
.tools .line { width: 5px; height: 32px; background: linear-gradient(90deg, transparent 2px, #999 2px, #999 3px, transparent 3px); }
.tools .drop { width: 19px; height: 30px; }
.tools .drop::after { width: 9px; height: 5px; background: #000; }
.tools .drop.dim::after { background: #777; }
.bgsel { display: flex; align-items: center; width: 112px; height: 26px; flex: none; margin: 0 1px; padding: 0 5px 0 4px; background: #fff; border: 1px solid #777; font-family: "Noto Sans CJK SC", sans-serif; font-size: 14px; }
.bgsel i { width: 15px; height: 15px; border: 1px solid #000; }
.bgsel select { flex: 1; min-width: 0; appearance: none; border: 0; padding: 0 5px; background: none; font: inherit; color: #000; }
.bgsel svg { width: 10px; height: 6px; flex: none; }
```
FILE: app.js
```js
// The first coordinate box is ready to be overtyped.
const firstBox = document.getElementById("px");
firstBox.focus();
firstBox.select();
```
